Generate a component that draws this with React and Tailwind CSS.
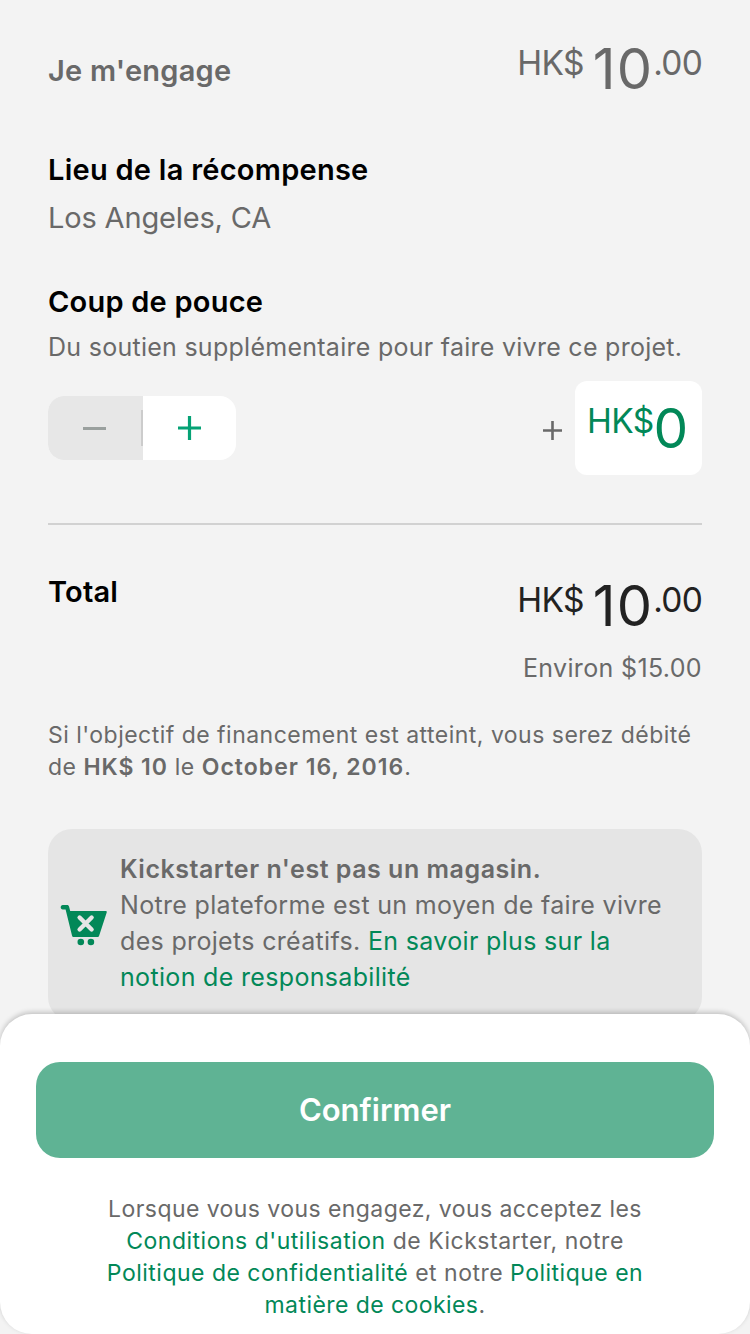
function Amount({ className }) {
  return (
    <div className={`flex items-start whitespace-nowrap ${className}`}>
      <span className="mt-[2.5px] text-[33.5px] leading-[40px] tracking-[-0.7px]">HK$</span>
      <span className="ml-[9px] text-[56px] leading-[59px] tracking-[1.2px]">10</span>
      <span className="mt-[2.5px] text-[33.5px] leading-[40px] tracking-[-0.8px]">.00</span>
    </div>
  );
}

function Stepper() {
  return (
    <div className="flex h-16 w-[188px] overflow-hidden rounded-2xl bg-white">
      <button className="flex h-16 w-[95px] items-center bg-[#e7e7e7]" aria-label="Diminuer">
        <span className="ml-[35px] h-[3px] w-[23px] bg-[#9aa09e]" />
        <span className="ml-auto h-9 w-[2px] bg-[#cccccc]" />
      </button>
      <button className="flex h-16 w-[93px] items-center justify-center" aria-label="Augmenter">
        <svg width="24" height="24" viewBox="0 0 24 24" fill="none" stroke="#05a275" strokeWidth="3.2">
          <path d="M11.5 0v24M0 12h23" />
        </svg>
      </button>
    </div>
  );
}

function CartIcon() {
  return (
    <svg className="mt-[76px] shrink-0" width="48" height="41" viewBox="0 0 48 41">
      <path
        d="M2.8 0H7c1.2 0 1.8.6 2.1 1.7L10.2 6H45.6c1 0 1.4.6 1.1 1.4L39.2 30.5c-.3 1-.9 1.5-1.9 1.5H13.8c-1 0-1.5-.5-1.8-1.5L5.6 4.5H2.8C0 4.5 0 0 2.8 0Z"
        fill="#028858"
      />
      <circle cx="20.8" cy="37" r="3.3" fill="#028858" />
      <circle cx="30.9" cy="37" r="3.3" fill="#028858" />
      <path d="m19.6 12.5 12 12m0-12-12 12" stroke="#e6e6e6" strokeWidth="4.4" strokeLinecap="round" />
    </svg>
  );
}

export default function App() {
  return (
    <div className="relative h-[1334px] w-[750px] overflow-hidden bg-[#f3f3f3] font-['Inter',sans-serif] text-[#696969]">
      <main className="flex flex-col px-12 pt-10">
        <div className="flex h-[112px] items-start justify-between">
          <h2 className="mt-[13px] text-[29px] leading-9 font-semibold tracking-[0.22px] whitespace-nowrap">Je m'engage</h2>
          <Amount className="text-[#696969]" />
        </div>

        <h2 className="text-[29px] leading-9 font-semibold tracking-[0.26px] whitespace-nowrap text-black">Lieu de la récompense</h2>
        <p className="mt-3 text-[29px] leading-9 tracking-[-0.16px] whitespace-nowrap">Los Angeles, CA</p>

        <h2 className="mt-12 text-[29px] leading-9 font-semibold tracking-[0.22px] whitespace-nowrap text-black">Coup de pouce</h2>
        <p className="mt-[11px] text-[25px] leading-8 tracking-[0.27px] whitespace-nowrap">
          Du soutien supplémentaire pour faire vivre ce projet.
        </p>

        <div className="mt-[18px] flex h-[94px] items-center justify-between">
          <Stepper />
          <div className="flex items-center">
            <svg className="mt-[5px] mr-[13px]" width="19" height="19" viewBox="0 0 19 19" stroke="#696969" strokeWidth="2.6">
              <path d="M9.5 0v19M0 9.5h19" />
            </svg>
            <div className="flex h-[94px] w-[127px] items-start rounded-xl bg-white pl-[12px] whitespace-nowrap text-[#028858]">
              <span className="mt-[19.5px] text-[33.5px] leading-[40px] tracking-[-0.7px]">HK$</span>
              <span className="mt-[17px] text-[55px] leading-[60px]">0</span>
            </div>
          </div>
        </div>

        <div className="mt-[48px] h-[2px] bg-[#d1d1d1]" />

        <div className="mt-[52px] flex h-[75px] items-start justify-between">
          <h2 className="-mt-[3px] text-[29px] leading-9 font-semibold tracking-[0.2px] text-black">Total</h2>
          <Amount className="text-[#222222]" />
        </div>
        <p className="self-end text-[25px] leading-8 tracking-[0.35px] whitespace-nowrap">Environ $15.00</p>

        <p className="mt-[35px] text-[23px] leading-8 tracking-[0.48px] whitespace-nowrap">
          <span className="block">Si l'objectif de financement est atteint, vous serez débité</span>
          <span className="block">
            de <b className="font-semibold tracking-[0.95px]">HK$ 10</b> le{' '}
            <b className="font-semibold tracking-[1.02px]">October 16, 2016</b>.
          </span>
        </p>

        <div className="mt-[46px] flex h-[192px] items-start rounded-3xl bg-[#e5e5e5] pl-[12px]">
          <CartIcon />
          <p className="mt-[22px] ml-[12px] text-[25px] leading-9 tracking-[0.33px] whitespace-nowrap">
            <b className="block font-semibold tracking-[0.52px]">Kickstarter n'est pas un magasin.</b>
            <span className="block">Notre plateforme est un moyen de faire vivre</span>
            <span className="block">
              des projets créatifs. <a className="text-[#028858]">En savoir plus sur la</a>
            </span>
            <a className="block text-[#028858]">notion de responsabilité</a>
          </p>
        </div>
      </main>

      <footer className="absolute inset-x-0 bottom-0 flex h-[320px] flex-col rounded-[32px] bg-white px-9 pt-12 shadow-[0_-2px_5px_rgba(0,0,0,0.2)]">
        <button className="h-24 shrink-0 rounded-3xl bg-[#5fb394] text-[31px] font-semibold text-white">Confirmer</button>
        <p className="mt-[35px] text-center text-[23px] leading-8 tracking-[0.43px] whitespace-nowrap">
          <span className="block">Lorsque vous vous engagez, vous acceptez les</span>
          <span className="block tracking-[0.51px]">
            <a className="text-[#028858]">Conditions d'utilisation</a> de Kickstarter, notre
          </span>
          <span className="block tracking-[0.49px]">
            <a className="text-[#028858]">Politique de confidentialité</a> et notre <a className="text-[#028858]">Politique en</a>
          </span>
          <span className="block">
            <a className="text-[#028858]">matière de cookies</a>.
          </span>
        </p>
      </footer>
    </div>
  );
}
